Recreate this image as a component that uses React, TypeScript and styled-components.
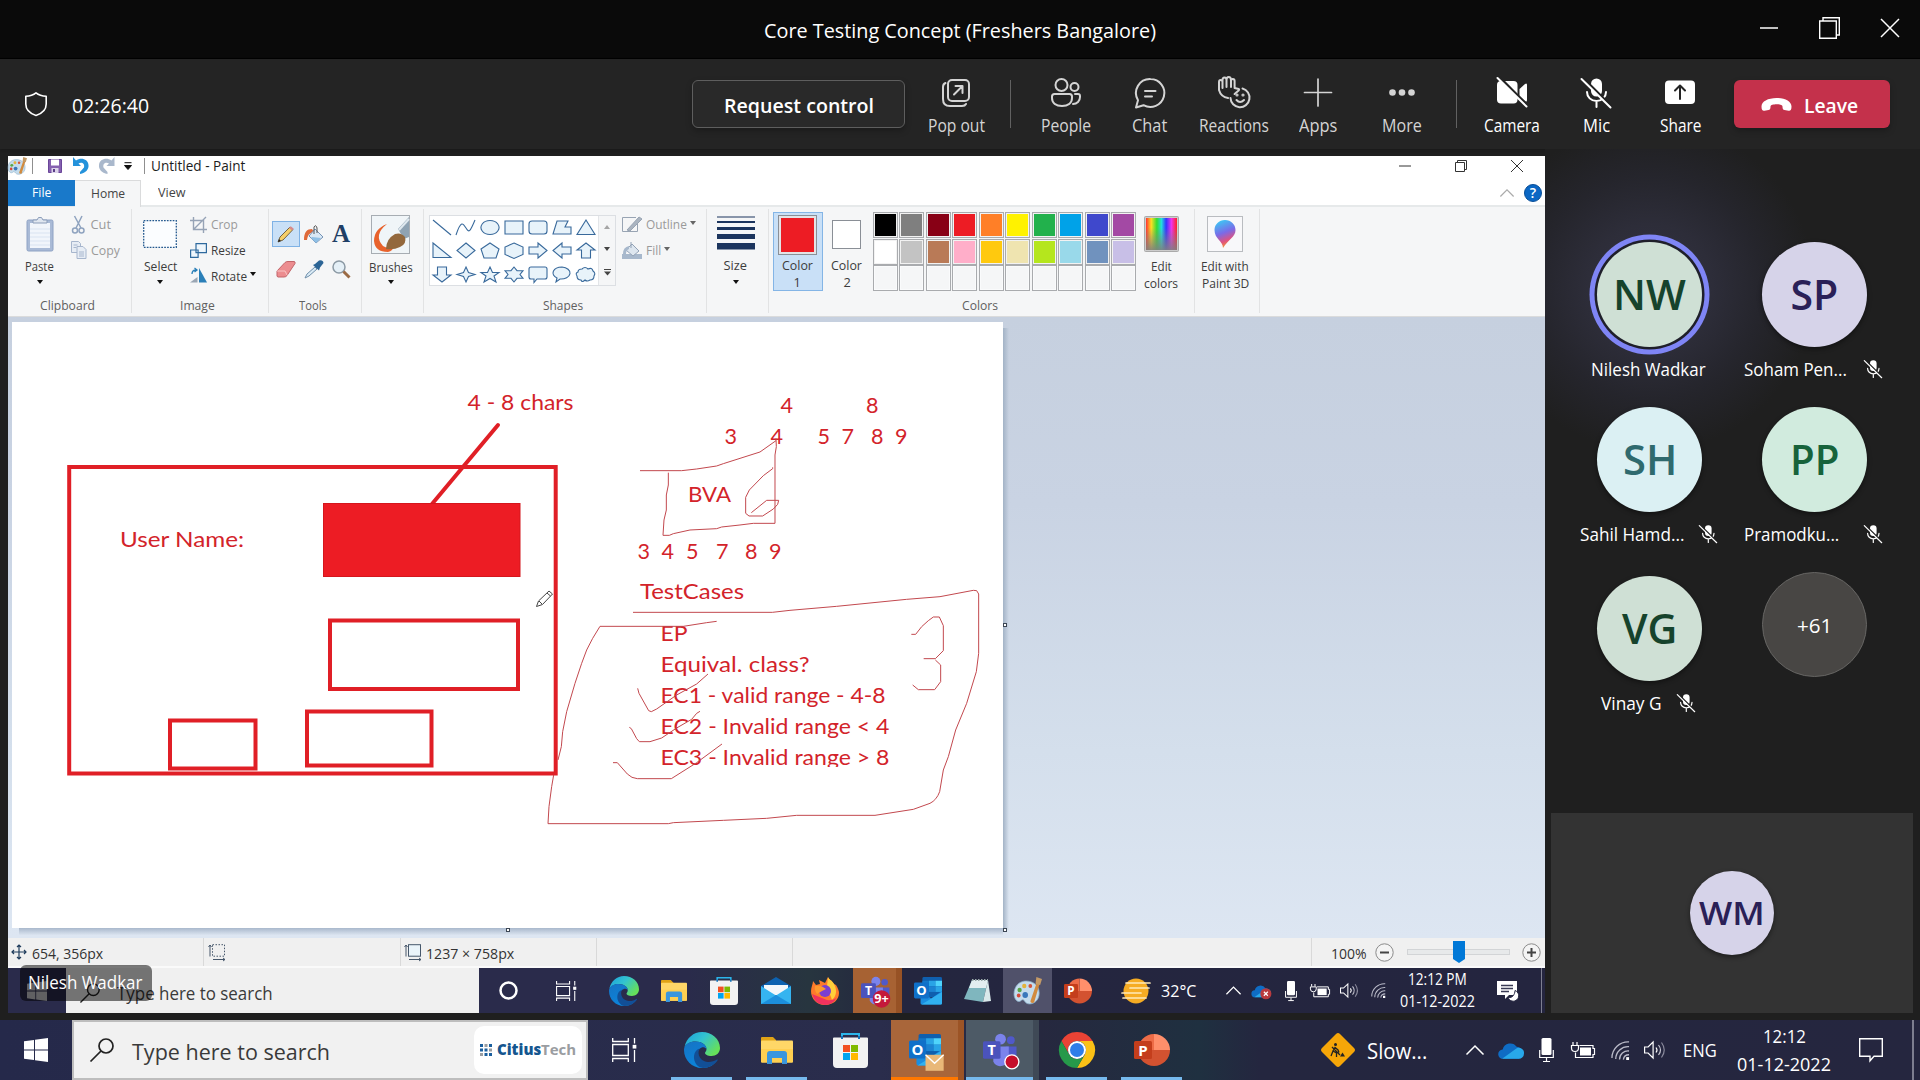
import React, { useLayoutEffect, useRef, useState } from "react";
import styled, { createGlobalStyle, css } from "styled-components";

const ui = '"Open Sans", "Noto Sans", sans-serif';

const GlobalStyle = createGlobalStyle`
  * { box-sizing: border-box; }
  body { margin: 0; background: #1f1f1f; font-family: ${ui}; overflow: hidden; }
  svg { display: block; flex: none; overflow: visible; }
`;

/* ---------- text that keeps a fixed measure ---------- */

const FitBox = styled.span<{ $w: number; $size: number; $color?: string; $weight?: number; $lh?: number }>`
  display: block;
  flex: none;
  width: ${(p) => p.$w}px;
  font-size: ${(p) => p.$size}px;
  line-height: ${(p) => (p.$lh ? `${p.$lh}px` : "1.3")};
  font-weight: ${(p) => p.$weight ?? 400};
  color: ${(p) => p.$color ?? "inherit"};
  white-space: nowrap;
`;
const FitInner = styled.span`
  display: inline-block;
  transform-origin: 0 50%;
`;

type FitProps = { w: number; size: number; color?: string; weight?: number; lh?: number; dx?: number; dy?: number; children: string };

function Fit({ w, size, color, weight, lh, dx = 0, dy = 0, children }: FitProps) {
  const ref = useRef<HTMLSpanElement>(null);
  const [scale, setScale] = useState(1);
  useLayoutEffect(() => {
    if (ref.current && ref.current.offsetWidth) setScale(w / ref.current.offsetWidth);
  }, [w, size, children]);
  return (
    <FitBox $w={w} $size={size} $color={color} $weight={weight} $lh={lh}>
      <FitInner ref={ref} style={{ transform: `translate(${dx}px, ${dy}px) scaleX(${scale})` }}>
        {children}
      </FitInner>
    </FitBox>
  );
}

/* ---------- page shell ---------- */

const Page = styled.div`
  width: 1920px;
  height: 1080px;
  display: flex;
  flex-direction: column;
  background: #1f1f1f;
  overflow: hidden;
`;
const TitleBar = styled.header`
  height: 59px;
  flex: none;
  display: flex;
  align-items: center;
  background: #0a0a0a;
  border-bottom: 1px solid #000;
  color: #fff;
  padding: 3px 21px 0 764px;
`;
const WindowButtons = styled.div`
  display: flex;
  align-items: center;
  gap: 41px;
  margin: -5px 0 0 auto;
`;
const MeetingBar = styled.div`
  height: 90px;
  flex: none;
  display: flex;
  align-items: center;
  background: #242424;
  box-shadow: 0 1px 2px #1a1a1a;
  padding: 0 29px 0 25px;
`;
const RequestButton = styled.button`
  width: 213px;
  height: 48px;
  margin-left: 543px;
  display: flex;
  align-items: center;
  justify-content: center;
  border: 1px solid #5e5e5e;
  border-radius: 6px;
  background: #292929;
  color: #fff;
  font-family: inherit;
  padding: 3px 0 0;
  box-shadow: 0 3px 6px rgba(0, 0, 0, 0.25);
`;
const Tool = styled.div<{ $bright?: boolean; $gap?: number }>`
  width: 84px;
  height: 65px;
  margin-left: ${(p) => p.$gap ?? 0}px;
  display: flex;
  flex-direction: column;
  align-items: center;
  justify-content: space-between;
  padding-top: 3px;
  margin-bottom: -2px;
  color: ${(p) => (p.$bright ? "#fff" : "#d4d4d4")};
  svg { height: 36px; }
`;
const BarDivider = styled.div<{ $ml: number }>`
  width: 1px;
  height: 48px;
  margin-left: ${(p) => p.$ml}px;
  background: #616161;
`;
const LeaveButton = styled.button`
  width: 156px;
  height: 48px;
  margin-left: 12px;
  border: 0;
  border-radius: 6px;
  background: #c4314b;
  color: #fff;
  font-family: inherit;
  display: flex;
  align-items: center;
  gap: 12px;
  padding: 2px 0 0 27px;
  box-shadow: 0 3px 6px rgba(0, 0, 0, 0.25);
`;
const Body = styled.main`
  height: 871px;
  flex: none;
  display: flex;
  padding-left: 8px;
`;

/* ---------- participants ---------- */

const Sidebar = styled.aside`
  width: 375px;
  display: flex;
  flex-direction: column;
  padding: 93px 0 7px 6px;
  background: radial-gradient(circle 165px at 105px 138px, #333342 0%, #2d2d39 38%, #25252c 68%, #1f1f1f 100%);
`;
const People = styled.div`
  display: grid;
  grid-template-columns: 165px 165px;
  grid-auto-rows: 165px;
  padding-left: 16px;
  height: 571px;
`;
const Person = styled.div<{ $mt?: number }>`
  display: flex;
  flex-direction: column;
  align-items: center;
  padding-top: ${(p) => p.$mt ?? 0}px;
`;
const Avatar = styled.div<{ $bg: string; $fg: string; $speaking?: boolean; $small?: boolean; $outline?: boolean }>`
  width: ${(p) => (p.$small ? 84 : 105)}px;
  height: ${(p) => (p.$small ? 84 : 105)}px;
  flex: none;
  border-radius: 50%;
  display: flex;
  align-items: center;
  justify-content: center;
  background: ${(p) => p.$bg};
  color: ${(p) => p.$fg};
  box-shadow: 0 2px 5px rgba(0, 0, 0, 0.45);
  ${(p) => p.$outline && css`border: 1px solid #666563; box-shadow: none;`}
  ${(p) => p.$speaking && css`box-shadow: 0 0 0 2.5px #1f1f2a, 0 0 0 7.5px #7f85f5;`}
`;
const NameRow = styled.div<{ $gap: number }>`
  display: flex;
  align-items: center;
  gap: ${(p) => p.$gap}px;
  margin: 10px 3px 0 0;
  color: #fff;
`;
const SelfTile = styled.div`
  width: 362px;
  height: 200px;
  background: #333;
  display: flex;
  align-items: center;
  justify-content: center;
`;

/* ---------- shared Paint window ---------- */

const Shared = styled.section`
  width: 1537px;
  height: 857px;
  margin-top: 7px;
  flex: none;
  display: flex;
  flex-direction: column;
  position: relative;
  background: #fff;
`;
const PaintTitle = styled.div`
  height: 24px;
  flex: none;
  display: flex;
  align-items: center;
  padding: 0 22px 5px 0;
`;
const ThinRule = styled.i<{ $ml: number }>`
  width: 1px;
  height: 16px;
  background: #8f8f8f;
  margin-left: ${(p) => p.$ml}px;
`;
const Gap = styled.i<{ $w: number }>`
  width: ${(p) => p.$w}px;
  flex: none;
`;
const PaintButtons = styled.div`
  display: flex;
  align-items: center;
  gap: 44px;
  margin-left: auto;
`;
const Tabs = styled.div`
  height: 27px;
  flex: none;
  display: flex;
  align-items: stretch;
  border-bottom: 2px solid #e6e9ea;
`;
const Tab = styled.div<{ $kind: "file" | "active" | "plain"; $w: number }>`
  width: ${(p) => p.$w}px;
  display: flex;
  align-items: center;
  justify-content: center;
  color: #444;
  ${(p) => p.$kind === "file" && css`background: #1979ca; color: #fff; margin-bottom: -1px;`}
  ${(p) =>
    p.$kind === "active" &&
    css`background: #f5f6f7; border: 1px solid #dadbdc; border-bottom: 0; border-left: 0; margin-bottom: -2px;`}
`;
const TabTools = styled.div`
  display: flex;
  align-items: center;
  gap: 10px;
  margin-left: auto;
  padding-right: 3px;
`;
const Help = styled.div`
  width: 18px;
  height: 18px;
  border-radius: 50%;
  background: #0b67c4;
  border: 1px solid #0a4f98;
  color: #fff;
  font-size: 14px;
  line-height: 16px;
  font-weight: 600;
  text-align: center;
`;
const Ribbon = styled.div`
  height: 110px;
  flex: none;
  display: flex;
  background: #f5f6f7;
  border-bottom: 1px solid #dadbdc;
  padding: 2px 0 3px;
`;
const Group = styled.div<{ $w: number }>`
  width: ${(p) => p.$w}px;
  flex: none;
  display: flex;
  flex-direction: column;
  justify-content: space-between;
  border-right: 1px solid #e2e3e4;
`;
const GroupBody = styled.div<{ $pl?: number }>`
  height: 86px;
  display: flex;
  align-items: flex-start;
  padding-left: ${(p) => p.$pl ?? 0}px;
`;
const GroupName = styled.div`
  height: 18px;
  display: flex;
  justify-content: center;
  align-items: center;
  color: #606060;
  padding: 2px 4px 0 0;
`;
const BigButton = styled.div<{ $w: number }>`
  width: ${(p) => p.$w}px;
  display: flex;
  flex-direction: column;
  align-items: center;
  color: #3c3c3c;
`;
const IconArea = styled.div<{ $h?: number }>`
  height: ${(p) => p.$h ?? 50}px;
  display: flex;
  align-items: center;
  justify-content: center;
`;
const Caret = styled.i<{ $mt?: number; $color?: string; $small?: boolean }>`
  width: 0;
  height: 0;
  margin-top: ${(p) => p.$mt ?? 0}px;
  border: ${(p) => (p.$small ? 3 : 3.5)}px solid transparent;
  border-top: 4px solid ${(p) => p.$color ?? "#111"};
  border-bottom: 0;
`;
const SmallRows = styled.div<{ $pl?: number }>`
  display: flex;
  flex-direction: column;
  padding: 3px 0 0 ${(p) => p.$pl ?? 0}px;
`;
const SmallRow = styled.div<{ $icon: number; $off?: boolean }>`
  height: 25.6px;
  display: flex;
  align-items: center;
  gap: 3.5px;
  color: ${(p) => (p.$off ? "#9a9a9a" : "#3c3c3c")};
  svg { width: ${(p) => p.$icon}px; }
`;
const ToolGrid = styled.div`
  display: grid;
  grid-template-columns: 28px 28px 26px;
  grid-template-rows: 26px 26px;
  row-gap: 9px;
  padding: 12px 0 0 3px;
`;
const ToolCell = styled.div<{ $on?: boolean }>`
  display: flex;
  align-items: center;
  justify-content: center;
  ${(p) => p.$on && css`background: #c9e0f7; border: 1px solid #7fb2e5;`}
`;
const LetterA = styled.span`
  font: bold 25px/24px "Liberation Serif", serif;
  color: #1f3f66;
`;
const Gallery = styled.div`
  width: 187px;
  height: 71px;
  margin: 6px 0 0 5px;
  display: flex;
  border: 1px solid #dcdfe3;
  background: #fff;
`;
const ShapeGrid = styled.div`
  display: grid;
  grid-template-columns: repeat(7, 24px);
  grid-template-rows: repeat(3, 23.3px);
  place-items: center;
`;
const GalleryScroll = styled.div`
  flex: 1;
  display: flex;
  flex-direction: column;
  align-items: center;
  justify-content: space-around;
  background: #f5f6f7;
  border-left: 1px solid #e3e5e8;
`;
const ColorSlot = styled.div<{ $w: number; $on?: boolean; $ml: number }>`
  width: ${(p) => p.$w}px;
  height: 79px;
  margin: 3px 0 0 ${(p) => p.$ml}px;
  display: flex;
  flex-direction: column;
  align-items: center;
  color: #3c3c3c;
  ${(p) => p.$on && css`background: #c9e0f7; box-shadow: inset 0 0 0 1px #84b5e6;`}
`;
const BigSwatch = styled.div<{ $w: number; $h: number; $c: string; $pad: number }>`
  width: ${(p) => p.$w}px;
  height: ${(p) => p.$h}px;
  margin-right: 1px;
  border: 1px solid #8a8f96;
  background: ${(p) => p.$c};
  box-shadow: inset 0 0 0 ${(p) => p.$pad}px #e3e3e6;
`;
const PaletteGrid = styled.div`
  display: grid;
  grid-template-columns: repeat(10, 25px);
  grid-template-rows: repeat(3, 26px);
  column-gap: 1.45px;
  row-gap: 0.5px;
  margin: 3px 0 0 5px;
`;
const PaletteCell = styled.i<{ $c?: string }>`
  border: 1px solid #a9abae;
  background: ${(p) => p.$c ?? "#f5f6f7"};
  box-shadow: inset 0 0 0 1px ${(p) => (p.$c ? "#f2f2f2" : "#fafbfc")};
`;
const Workspace = styled.div`
  height: 621px;
  flex: none;
  padding: 5px 0 0 4px;
  background: linear-gradient(#c6d0df 0, #c9d3e3 30%, #d4dfec 70%, #dde6f2 100%);
`;
const StatusBar = styled.div`
  height: 30px;
  flex: none;
  display: flex;
  align-items: stretch;
  background: #f0f0f0;
  border-bottom: 2px solid #fafafa;
  color: #333;
`;
const StatusCell = styled.div<{ $w: number; $pl: number }>`
  width: ${(p) => p.$w}px;
  display: flex;
  align-items: center;
  gap: 5px;
  padding-left: ${(p) => p.$pl}px;
  border-right: 1px solid #d9d9d9;
`;
const Zoomer = styled.div`
  flex: 1;
  display: flex;
  align-items: center;
  padding-left: 20px;
`;

/* ---------- taskbars ---------- */

const InnerBar = styled.div`
  height: 45px;
  flex: none;
  display: flex;
  align-items: center;
  background: linear-gradient(90deg, #2a2b4b 0, #2a2b4b 680px, #27353f 800px, #24263f 880px, #24253f 100%);
  color: #fff;
`;
const Slot = styled.div<{ $w: number; $bg?: string; $under?: string; $edge?: string; $ml?: number }>`
  width: ${(p) => p.$w}px;
  height: 100%;
  flex: none;
  margin-left: ${(p) => p.$ml ?? 0}px;
  display: flex;
  align-items: center;
  justify-content: center;
  background: ${(p) => p.$bg ?? "transparent"};
  ${(p) => p.$edge && css`border-right: 6px solid ${p.$edge};`}
  ${(p) => p.$under && css`box-shadow: inset 0 -3px 0 ${p.$under};`}
`;
const InnerSearch = styled.div`
  width: 413px;
  height: 100%;
  display: flex;
  align-items: center;
  gap: 18px;
  padding: 4px 0 0 14px;
  background: #f0f0f0;
  color: #3a3a3a;
`;
const Clock = styled.div<{ $w: number; $gap: number; $ml: number }>`
  width: ${(p) => p.$w}px;
  margin-left: ${(p) => p.$ml}px;
  display: flex;
  flex-direction: column;
  align-items: center;
  gap: ${(p) => p.$gap}px;
`;
const EndLine = styled.i<{ $ml: number; $w: number }>`
  width: ${(p) => p.$w}px;
  height: 100%;
  margin-left: ${(p) => p.$ml}px;
  background: #7d7e90;
`;
const SpeakerTag = styled.div`
  position: absolute;
  left: 12px;
  top: 809px;
  width: 132px;
  height: 36px;
  border-radius: 6px;
  background: rgba(0, 0, 0, 0.52);
  color: #fff;
  display: flex;
  align-items: center;
  justify-content: center;
  padding: 0 2px 1px 0;
`;
const OuterBar = styled.footer`
  height: 60px;
  flex: none;
  display: flex;
  align-items: center;
  background: linear-gradient(90deg, #25294a 0, #2a2d4c 880px, #26283f 1040px, #1f3040 1200px, #24263f 1260px, #25263f 100%);
  color: #fff;
`;
const OuterSearch = styled.div`
  width: 516px;
  height: 60px;
  display: flex;
  align-items: center;
  border: 2px solid #bdbdbd;
  background: #f1f1f1;
  color: #3a3a3a;
  padding-left: 16px;
`;
const Pill = styled.div`
  width: 108px;
  height: 48px;
  margin-left: auto;
  margin-right: 4px;
  border-radius: 10px;
  background: #fff;
  display: flex;
  align-items: center;
  justify-content: center;
  gap: 5px;
`;
const Brand = styled.div`
  display: flex;
`;

/* ---------- icons ---------- */

const line = { fill: "none", stroke: "currentColor", strokeWidth: 2, strokeLinecap: "round", strokeLinejoin: "round" } as const;

const MicOff = ({ s }: { s: number }) => (
  <svg width={s} height={s} viewBox="0 0 30 30" fill="none">
    <rect x="10" y="0.5" width="11" height="18" rx="5.5" fill="currentColor" />
    <path d="M6 14c0 5 4 9 9.500 9s9.500-4 9.500-9M15.500 23v6" stroke="currentColor" strokeWidth="2" strokeLinecap="round" />
    <path d="M2 0l29 29" stroke="#222" strokeWidth="2.500" />
    <path d="M0.500 1l29 28.500" stroke="currentColor" strokeWidth="2" strokeLinecap="round" />
  </svg>
);

const Explorer = ({ w, h }: { w: number; h: number }) => (
  <svg width={w} height={h} viewBox="0 0 32 27" preserveAspectRatio="none">
    <path d="M0 1a1 1 0 0 1 1-1h11l3 3v6H0z" fill="#e0a316" />
    <rect y="3.500" width="32" height="22" rx="1" fill="#ffd767" />
    <path d="M0 12h32v12.500a1 1 0 0 1-1 1H1a1 1 0 0 1-1-1z" fill="#ffcf50" />
    <path d="M6 27V17a3 3 0 0 1 3-3h14a3 3 0 0 1 3 3v10h-5v-6H11v6z" fill="#3a96dd" />
  </svg>
);

const Store = ({ w, h }: { w: number; h: number }) => (
  <svg width={w} height={h} viewBox="0 0 35 35" preserveAspectRatio="none">
    <path d="M9 7V1h17v6" fill="none" stroke="#2cb5ea" strokeWidth="2" />
    <path d="M0 5.500a1 1 0 0 1 1-1h33a1 1 0 0 1 1 1V31a4 4 0 0 1-4 4H4a4 4 0 0 1-4-4z" fill="#f2f2f2" />
    <path d="M9 6V3M26 6V3" stroke="#1573b8" strokeWidth="2" />
    <rect x="10" y="12" width="7" height="7" fill="#f25022" />
    <rect x="18" y="12" width="7" height="7" fill="#7fba00" />
    <rect x="10" y="20" width="7" height="7" fill="#00a4ef" />
    <rect x="18" y="20" width="7" height="7" fill="#ffb900" />
  </svg>
);

const Edge = ({ s, id }: { s: number; id: string }) => (
  <svg width={s} height={s} viewBox="0 0 36 36">
    <defs>
      <linearGradient id={`${id}a`} x1="0" y1="0" x2="1" y2="0.600">
        <stop offset="0" stopColor="#1a9fdc" />
        <stop offset="0.500" stopColor="#33c3d0" />
        <stop offset="1" stopColor="#66e05a" />
      </linearGradient>
      <linearGradient id={`${id}b`} x1="0" y1="0" x2="0.600" y2="1">
        <stop offset="0" stopColor="#1673c4" />
        <stop offset="1" stopColor="#0a86dd" />
      </linearGradient>
    </defs>
    <path d="M0.500 15C2.500 6 9.500 0 18 0c10 0 18 7 18 16 0 5-4 8-8.500 8-4 0-6.500-1.500-6.500-3 0-1 1.500-1.500 1.500-4 0-4-5-7.500-11-7.500-4.500 0-9 2-11 5.500z" fill={`url(#${id}a)`} />
    <path d="M0 18c0-5.500 5-8.500 11.500-8.500 6 0 11 3.500 11 7.500-2-2.500-5-2-7 0-4 3-3 11 3 14 5 2.500 11 1.500 14.500-3C30 33 25 36 18 36 8 36 0 28 0 18z" fill={`url(#${id}b)`} />
    <path d="M15.500 16.500c-3 6.500 1.500 13 8 13.500 3.500.300 7-1 9.500-2.500.600-.300 1 .200.600.800C30.500 33 25 36 19 36c-6-.500-9.500-6.500-9-12 .300-3.500 2.500-6.500 5.500-7.500z" fill="#124f97" />
  </svg>
);

const Outlook = ({ s, mail }: { s: number; mail?: boolean }) => (
  <svg width={s} height={s} viewBox="0 0 30 30">
    <rect x="9" y="0" width="21" height="22" rx="1.500" fill="#0f5fae" />
    <rect x="9" y="4" width="7" height="6" fill="#1276c8" />
    <rect x="16" y="4" width="7" height="6" fill="#29a4e6" />
    <rect x="23" y="4" width="7" height="6" fill="#4fd4fb" />
    <rect x="16" y="10" width="7" height="6" fill="#1c83d2" />
    <rect x="23" y="10" width="7" height="6" fill="#29a4e6" />
    <path d="M7 15l11.500 8L30 15v13a1.500 1.500 0 0 1-1.500 1.500h-20A1.500 1.500 0 0 1 7 28z" fill="#1a8ee0" />
    <path d="M30 16v12a1.500 1.500 0 0 1-1.500 1.500H8z" fill="#30b1f0" />
    <rect x="0" y="6" width="16" height="17" rx="1.500" fill="#0f70c9" />
    <text x="8" y="19.500" fontSize="14" fontWeight="700" fill="#fff" textAnchor="middle" fontFamily="Open Sans, sans-serif">O</text>
    {mail && (
      <g>
        <rect x="15.500" y="19.500" width="17" height="15" fill="#e9b878" />
        <path d="M15.500 19.500l8.500 8 8.500-8" fill="none" stroke="#fff" strokeWidth="1.300" />
      </g>
    )}
  </svg>
);

const TeamsIcon = ({ s, badge }: { s: number; badge: "count" | "live" }) => (
  <svg width={s} height={s} viewBox="0 0 32 32">
    <circle cx="27" cy="6" r="3.800" fill="#5059c9" />
    <circle cx="17" cy="5" r="5.200" fill="#7b83eb" />
    <path d="M22 12h10.500v10a6 6 0 0 1-10 4z" fill="#5059c9" />
    <path d="M10 12h15v11a8 8 0 0 1-15 4z" fill="#7b83eb" />
    <rect x="0" y="7" width="17" height="17" rx="1.500" fill="#4b53bc" />
    <text x="8.500" y="20.500" fontSize="14" fontWeight="700" fill="#fff" textAnchor="middle" fontFamily="Open Sans, sans-serif">T</text>
    {badge === "live" ? (
      <circle cx="28" cy="27" r="6.800" fill="#c50f2b" stroke="#fff" strokeWidth="1.300" />
    ) : (
      <g>
        <circle cx="23.500" cy="25" r="10" fill="#c4183a" />
        <text x="23.500" y="30" fontSize="14.500" fontWeight="700" fill="#fff" textAnchor="middle" fontFamily="Open Sans, sans-serif">9+</text>
      </g>
    )}
  </svg>
);

const Ppt = ({ s }: { s: number }) => (
  <svg width={s} height={s} viewBox="0 0 36 36">
    <path d="M20 2a16 16 0 0 1 16 16H20z" fill="#ff8f6b" />
    <path d="M20 2a16 16 0 0 0-16 16h16z" fill="#ed6c47" />
    <path d="M4 18h32a16 16 0 0 1-32 0z" fill="#d35230" />
    <rect x="0" y="9" width="18" height="18" rx="1.500" fill="#c43e1c" />
    <text x="9" y="23.500" fontSize="15" fontWeight="700" fill="#fff" textAnchor="middle" fontFamily="Open Sans, sans-serif">P</text>
  </svg>
);

const Chrome = () => (
  <svg width="36" height="36" viewBox="0 0 36 36">
    <path d="M18 9h15.600A18 18 0 0 0 2.400 9l7.800 13.500A9 9 0 0 1 18 9z" fill="#ea4335" />
    <path d="M33.600 9H18a9 9 0 0 1 7.800 13.500L18 36A18 18 0 0 0 33.600 9z" fill="#fbc116" />
    <path d="M2.400 9A18 18 0 0 0 18 36l7.800-13.500a9 9 0 0 1-15.600 0z" fill="#26994a" />
    <circle cx="18" cy="18" r="9" fill="#fff" />
    <circle cx="18" cy="18" r="7" fill="#2f7de9" />
  </svg>
);

const PaletteIcon = ({ w, h }: { w: number; h: number }) => (
  <svg width={w} height={h} viewBox="0 0 30 28" preserveAspectRatio="none">
    <path d="M13 4C5 4 0 10 0 17c0 5 4 9 7 7 2-1.500 3-2 5 1 3 4 15 2 15-9C27 8 20 4 13 4z" fill="#c5dcec" stroke="#86aac6" strokeWidth="0.800" />
    <circle cx="6" cy="13" r="2.300" fill="#5aa646" />
    <circle cx="11" cy="9" r="2.300" fill="#e4b33b" />
    <circle cx="5" cy="18.500" r="2" fill="#d54a3a" />
    <circle cx="17.500" cy="9" r="2" fill="#d2553c" />
    <circle cx="12" cy="18" r="3" fill="#3a78bb" />
    <path d="M20 26c-2 0-3-1-2-3l7-19 3 1-6 19c0 1-1 2-2 2z" fill="#d18b3f" />
    <path d="M24 0l6 2-2 6-5-1z" fill="#c49a66" />
  </svg>
);

const WinLogo = ({ s, fill }: { s: number; fill: string }) => (
  <svg width={s} height={s} viewBox="0 0 24 24">
    <path d="M0 3.300l10-1.400v9.600H0zM11 1.700L24 0v11.500H11zM0 12.500h10v9.600L0 20.700zM11 12.500h13V24l-13-1.700z" fill={fill} />
  </svg>
);

const TaskView = ({ s }: { s: number }) => (
  <svg width={s} height={s} viewBox="0 0 24 24" fill="none" stroke="#fff" strokeWidth="1.300">
    <path d="M0.700 6.500h15.600v11H0.700zM0.700 0v3.500h15.600V0M0.700 24v-3.500h15.600V24M22.500 0v5.500M22.500 12v12" />
    <rect x="21.300" y="7.500" width="2.400" height="2.400" fill="#fff" />
  </svg>
);

const SearchIcon = ({ s }: { s: number }) => (
  <svg width={s} height={s} viewBox="0 0 24 24" fill="none" stroke="#222" strokeWidth="1.700">
    <circle cx="16" cy="8" r="7" />
    <path d="M11 13L0.500 23.500" />
  </svg>
);

const TrayMic = ({ w, h }: { w: number; h: number }) => (
  <svg width={w} height={h} viewBox="0 0 15 24" preserveAspectRatio="none">
    <rect x="2.500" y="0" width="10" height="17" rx="1.500" fill="#fff" />
    <path d="M0.700 12v7.500h13.600V12M7.500 20v3.500M4 23.500h7" fill="none" stroke="#fff" strokeWidth="1.200" />
  </svg>
);
const Battery = ({ w, h }: { w: number; h: number }) => (
  <svg width={w} height={h} viewBox="0 0 24 17" preserveAspectRatio="none" fill="none" stroke="#fff" strokeWidth="1.200">
    <path d="M8.500 3.500H22v3h1.500v6H22v3H4.500v-5M2 0v3M6 0v3M0.500 3.500h7V6a3.500 3.500 0 0 1-7 0z" />
    <rect x="9" y="5.500" width="11" height="8" fill="#fff" stroke="none" />
  </svg>
);
const Wifi = ({ s }: { s: number }) => (
  <svg width={s} height={s} viewBox="0 0 20 20" fill="none" stroke="#b9bac8" strokeWidth="1.400">
    <path d="M1 18A17 17 0 0 1 19 1M5 19A13 13 0 0 1 19 6M9 19.500A9 9 0 0 1 19 10.500M13 19.500A6 6 0 0 1 19 14.500" />
    <rect x="16" y="17" width="3" height="3" fill="#fff" stroke="none" />
  </svg>
);
const Speaker = ({ w, h }: { w: number; h: number }) => (
  <svg width={w} height={h} viewBox="0 0 22 18" preserveAspectRatio="none" fill="none" stroke="#fff" strokeWidth="1.200">
    <path d="M0.600 6v6h3.500l5 5V1l-5 5zM12 6.500q2 2.500 0 5" />
    <path d="M14.500 4q4 5 0 10" stroke="#c5c5d0" />
    <path d="M17.500 1.500q5.500 7.500 0 15" stroke="#8a8a9c" />
  </svg>
);
const ChevronUp = ({ w, h, c }: { w: number; h: number; c: string }) => (
  <svg width={w} height={h} viewBox="0 0 18 10" fill="none" stroke={c} strokeWidth="1.500">
    <path d="M0.500 9.500L9 1l8.500 8.500" />
  </svg>
);
const Cloud = ({ w, h, bad }: { w: number; h: number; bad?: boolean }) => (
  <svg width={w} height={h} viewBox="0 0 24 16">
    <path d="M4 16a4.500 4.500 0 0 1-.500-9A7.500 7.500 0 0 1 17 4.500 6 6 0 0 1 19 16z" fill="#0f6cc4" />
    <path d="M3 16l13-9.500A5 5 0 0 1 24 11a5 5 0 0 1-5 5z" fill="#28a8ea" />
    {bad && (
      <g>
        <circle cx="17.500" cy="11.500" r="7" fill="#b93a3e" />
        <path d="M15 9l5 5m0-5l-5 5" stroke="#fff" strokeWidth="1.500" />
      </g>
    )}
  </svg>
);

const DimIcon = ({ dashed }: { dashed?: boolean }) => (
  <svg width="18" height="17" viewBox="0 0 18 17" fill="none" stroke="#46576b" strokeWidth="1">
    <rect x="4.500" y="0.700" width="12" height="11.500" fill={dashed ? "none" : "#eaf4fa"} strokeDasharray={dashed ? "1.500 1.500" : undefined} />
    <path d="M2 1v11.500M0.500 3L2 1l1.500 2M5 15.500h12M15 14l2 1.500-2 1.500" />
  </svg>
);

/* ---------- shape gallery ---------- */

const shapePaths = [
  "M1 0L19 15",
  "M0 15C5 0 7 3 10 8S14 12 19 0",
  "M10 .5a9 7 0 1 0 .01 0z",
  "M1 1h18v13H1z",
  "M4 1h12q3 0 3 3v7q0 3-3 3H4q-3 0-3-3V4q0-3 3-3z",
  "M5 1h11l-3 6h6v7H1z",
  "M10 0l9 14.500H1z",
  "M1 0v14.500h18z",
  "M10 0l9 7.500-9 7.500-9-7.500z",
  "M10 0l9 6-3 9H4L1 6z",
  "M10 0l9 4v7.500l-9 4-9-4V4z",
  "M1 4h9V0l9 7.500L10 15v-4H1z",
  "M19 4h-9V0L1 7.500 10 15v-4h9z",
  "M10 0l9 7h-4.500v8h-9V7H1z",
  "M10 15l9-7h-4.500V0h-9v8H1z",
  "M10 0l2.500 5.500L19 7.500l-6.500 2L10 15 7.500 9.500 1 7.500l6.500-2z",
  "M10 0l2.500 5.500H19L14 9l2 6-6-3.500L4 15l2-6-5-3.500h6.500z",
  "M10 0l3 3.700h6L16 7.500l3 3.800h-6L10 15l-3-3.700H1L4 7.500 1 3.700h6z",
  "M3 0h14q2 0 2 2v8q0 2-2 2H9l-3 3.500V12H3q-2 0-2-2V2q0-2 2-2z",
  "M10 0a9 6 0 1 1-2 12l-4 3 1-4A9 6 0 0 1 10 0z",
  "M6 2q3-3 6 0 4-2 5 2 3 2 1 5 0 4-4 4-3 2-5 0-3 3-4 0-4 0-4-4-2-3 1-4 0-3 4-3z",
];

const paletteColors: (string | undefined)[] = [
  "#000000", "#7f7f7f", "#880015", "#ed1c24", "#ff7f27", "#fff200", "#22b14c", "#00a2e8", "#3f48cc", "#a349a4",
  "#ffffff", "#c3c3c3", "#b97a57", "#ffaec9", "#ffc90e", "#efe4b0", "#b5e61d", "#99d9ea", "#7092be", "#c8bfe7",
  ...Array(10).fill(undefined),
];

/* ---------- the drawing ---------- */

const notes: [number, number, number, string][] = [
  [467.5, 410, 106, "4 - 8 chars"],
  [120, 547.3, 124, "User Name:"],
  [780.5, 412.7, 12.5, "4"], [866, 412.7, 12.5, "8"],
  [724.5, 444.3, 12.5, "3"], [770.5, 444.3, 12.5, "4"], [817.5, 444.3, 12.5, "5"], [841.5, 444.3, 12.5, "7"], [871, 444.3, 12.5, "8"], [895, 444.3, 12.5, "9"],
  [688, 502.3, 43, "BVA"],
  [637.5, 559, 12.5, "3"], [661.5, 559, 12.5, "4"], [686, 559, 12.5, "5"], [716, 559, 12.5, "7"], [745, 559, 12.5, "8"], [769, 559, 12.5, "9"],
  [640, 599, 104, "TestCases"],
  [660.5, 640.6, 27, "EP"],
  [660.5, 671.8, 149, "Equival. class?"],
  [660.5, 703, 225, "EC1 - valid range - 4-8"],
  [660.5, 734, 229, "EC2 - Invalid range < 4"],
];

const Drawing = () => (
  <svg width="1000" height="616" viewBox="12 322 1000 616" fontFamily="Lato, Carlito, sans-serif" fontSize="22" fill="#d3232a">
    <defs>
      <linearGradient id="shB" x1="0" y1="0" x2="0" y2="1"><stop offset="0" stopColor="#a9b8cc" /><stop offset="1" stopColor="#dbe4f0" /></linearGradient>
      <linearGradient id="shR" x1="0" y1="0" x2="1" y2="0"><stop offset="0" stopColor="#a3b3c6" /><stop offset="1" stopColor="#a3b3c6" stopOpacity="0" /></linearGradient>
      <clipPath id="lastLine"><rect x="650" y="740" width="260" height="27" /></clipPath>
    </defs>
    <rect x="19" y="928" width="984" height="7" fill="url(#shB)" />
    <rect x="1003" y="328" width="6" height="602" fill="url(#shR)" />
    <rect x="12" y="322" width="991" height="606" fill="#fff" />
    <g fill="none" stroke="#e01f26" strokeWidth="4">
      <rect x="69.200" y="467" width="486.500" height="306.500" />
      <rect x="330" y="620.500" width="188" height="68.500" />
      <rect x="170" y="720.500" width="85.500" height="48" />
      <rect x="307" y="711.500" width="124.500" height="54" />
      <path d="M498 425L432 504" strokeLinecap="round" />
    </g>
    <rect x="323.500" y="503.500" width="196.500" height="73" fill="#ed1c24" stroke="#d4161d" />
    {notes.map(([x, y, w, t], i) => (
      <text key={i} x={x} y={y} textLength={w} lengthAdjust="spacingAndGlyphs">{t}</text>
    ))}
    <g clipPath="url(#lastLine)">
      <text x="660.500" y="765.200" textLength="229" lengthAdjust="spacingAndGlyphs">EC3 - Invalid range &gt; 8</text>
    </g>
    <g transform="translate(540 370) scale(.33333)" fill="none" stroke="#c2474d" strokeWidth="3" strokeLinejoin="round">
      <path d="M300 302H425L470 297 530 288 550 281 660 246 708 212M708 205L709 230 705 255V460H640L600 465 545 471 530 476 450 480 400 491 388 496H369L372 450 379 420V375L385 345V308" />
      <path d="M698 292V296L670 317 628 360 617 382V430L627 438H668L700 417 713 403 716 391H680L634 428" />
      <path d="M279 727H697L750 721 890 709 1100 688 1200 680 1300 661 1310 662 1316 672V850L1309 905 1280 1000 1247 1080 1225 1160 1210 1200 1199 1265Q1190 1290 1170 1300L1120 1318 1005 1336H770L680 1345 550 1351 400 1358 385 1361H24L27 1310 35 1250 41 1215M54 1170L64 1130 68 1085 80 1025 105 940 125 880 140 840 158 805 180 769H430L500 758 530 754" />
      <path d="M1114 793H1127L1145 770 1165 752 1180 741H1198L1210 767V842L1186 866H1151M1186 870L1202 885V935L1184 959H1135L1118 945" />
      <path d="M293 955L297 970 326 1022 334 1025 350 1017 410 975 470 942 504 912" />
      <path d="M268 1072L274 1076 290 1106 298 1115H330L365 1104 410 1074 455 1048 470 1030 480 1024" />
      <path d="M219 1178H232L262 1212Q275 1225 292 1226H394L470 1178 546 1122" />
    </g>
    <g fill="#fff" stroke="#3c4654" strokeWidth="1">
      <rect x="1003.500" y="623.500" width="3" height="3" />
      <rect x="506.500" y="928.500" width="3" height="3" />
      <rect x="1003.500" y="928.500" width="3" height="3" />
    </g>
    <path d="M536.500 606.500l2-5.500 10.500-10 3.500 3-10 10.500zM547 593l3.500 3M539 601l3 3" fill="#fff" stroke="#444" strokeWidth="1" />
  </svg>
);

const L = 12.8;

function PaintWindow() {
  return (
    <Shared>
      <PaintTitle>
        <PaletteIcon w={19} h={18} />
        <ThinRule $ml={5} />
        <Gap $w={15} />
        <svg width="14" height="14" viewBox="0 0 14 14"><path d="M0.500 0.500h13v13h-13z" fill="#8560b0" stroke="#6a4699" /><rect x="3" y="0.500" width="8" height="6" fill="#fff" /><rect x="3.500" y="9" width="7" height="5" fill="#dcd3ea" /><rect x="5" y="10" width="2" height="3" fill="#5a3d86" /></svg>
        <Gap $w={11} />
        <svg width="16" height="17" viewBox="0 0 16 17"><path d="M0 0v9h8L5.500 6.500C9 4.500 12 7 11 10.500L7 15v2c6-1 9-5 8.500-9C15 2 8 0 3 3.500z" fill="#2492db" /></svg>
        <Gap $w={9} />
        <svg width="17" height="17" viewBox="0 0 16 17"><path d="M16 0v9H8l2.500-2.500C7 4.500 4 7 5 10.500L9 15v2C3 16 0 12 .5 8 1 2 8 0 13 3.500z" fill="#a9b8cc" /></svg>
        <Gap $w={9} />
        <svg width="8" height="8" viewBox="0 0 8 8"><path d="M0.500 0.700h7M0.500 3.500h7L4 7.500z" fill="#111" stroke="#111" /></svg>
        <ThinRule $ml={12} />
        <Gap $w={6} />
        <Fit w={94} size={15} color="#1c1c1c">Untitled - Paint</Fit>
        <PaintButtons>
          <svg width="12" height="12" viewBox="0 0 12 12"><path d="M0 6h12" stroke="#333" /></svg>
          <svg width="12" height="12" viewBox="0 0 12 12" fill="none" stroke="#333"><path d="M0.500 2.500h9v9h-9zM2.500 2.500v-2h9v9h-2" /></svg>
          <svg width="12" height="12" viewBox="0 0 12 12"><path d="M0 0l12 12M12 0L0 12" stroke="#333" /></svg>
        </PaintButtons>
      </PaintTitle>
      <Tabs>
        <Tab $kind="file" $w={67}><Fit w={19} size={13.5}>File</Fit></Tab>
        <Tab $kind="active" $w={66}><Fit w={34} size={13.5}>Home</Fit></Tab>
        <Tab $kind="plain" $w={61}><Fit w={28} size={13.5}>View</Fit></Tab>
        <TabTools><ChevronUp w={14} h={8} c="#aaa" /><Help>?</Help></TabTools>
      </Tabs>
      <Ribbon>
        <Group $w={124}>
          <GroupBody $pl={1}>
            <BigButton $w={62}>
              <IconArea>
                <svg width="28" height="35" viewBox="0 0 28 35"><rect x="1" y="3" width="26" height="31" rx="1.500" fill="#a9bad6" stroke="#8ea2c4" /><rect x="4" y="6" width="20" height="25" fill="#f1f5fb" /><path d="M4 12h20M4 16h20M4 20h20M4 24h20M4 28h20" stroke="#d9e3f1" /><path d="M7 6V3h4l1.500-2.500h3L17 3h4v3z" fill="#dfe6f0" stroke="#8b9db9" /></svg>
              </IconArea>
              <Fit w={29} size={L} lh={17} dx={-1} dy={-1}>Paste</Fit>
              <Caret $mt={4} />
            </BigButton>
            <SmallRows>
              <SmallRow $icon={16} $off>
                <svg height="18" viewBox="0 0 16 18" fill="none" stroke="#8fa3bf" strokeWidth="1.500"><path d="M3.500 0L10 12M11 0L5 12" /><circle cx="4" cy="14.500" r="2.500" /><circle cx="10.500" cy="14.500" r="2.500" /></svg>
                <Fit w={20} size={L}>Cut</Fit>
              </SmallRow>
              <SmallRow $icon={16} $off>
                <svg height="18" viewBox="0 0 16 18" fill="#e7edf5" stroke="#a7b6cd"><path d="M0.500 0.500h7l2 2v9h-9zM2.500 4h4M2.500 6.500h3" /><path d="M6 5.500h6l3 3v9H6zM8 11h5M8 13h5M8 15h5" /></svg>
                <Fit w={29} size={L}>Copy</Fit>
              </SmallRow>
            </SmallRows>
          </GroupBody>
          <GroupName><Fit w={55} size={L}>Clipboard</Fit></GroupName>
        </Group>
        <Group $w={137}>
          <GroupBody>
            <BigButton $w={56}>
              <IconArea>
                <svg width="34" height="28"><rect x="0.700" y="0.700" width="32.600" height="26.600" fill="#fbfdff" stroke="#23588f" strokeWidth="1.300" strokeDasharray="1.700 1.200" /></svg>
              </IconArea>
              <Fit w={33} size={L} lh={17} dy={-1}>Select</Fit>
              <Caret $mt={4} />
            </BigButton>
            <SmallRows $pl={2}>
              <SmallRow $icon={17} $off>
                <svg height="16" viewBox="0 0 17 16" fill="none" stroke="#96a3b6" strokeWidth="1.400"><path d="M3.500 0v12.500H17M0 3.500h13.500V16M4 12L16 0" /></svg>
                <Fit w={27} size={L}>Crop</Fit>
              </SmallRow>
              <SmallRow $icon={17}>
                <svg height="15" viewBox="0 0 17 15" fill="#eef6fc" stroke="#2f6a9e" strokeWidth="1.200"><path d="M6 0.600h10.400v9H6zM0.600 7h7.500v7.400H0.600z" /></svg>
                <Fit w={35} size={L}>Resize</Fit>
              </SmallRow>
              <SmallRow $icon={17}>
                <svg height="15" viewBox="0 0 17 15"><path d="M0 14.500L7.500 9v5.500z" fill="#9aa6b4" /><path d="M9 0v14.500h8z" fill="#2a7fb8" /><path d="M2 6q0-4 4-4M4.500 0L7 2 4.500 4" fill="none" stroke="#2a7fb8" strokeWidth="1.300" /></svg>
                <Fit w={36} size={L}>Rotate</Fit>
                <Caret $small $mt={-3} />
              </SmallRow>
            </SmallRows>
          </GroupBody>
          <GroupName><Fit w={35} size={L} dx={-1}>Image</Fit></GroupName>
        </Group>
        <Group $w={93}>
          <GroupBody>
            <ToolGrid>
              <ToolCell $on>
                <svg width="18" height="18" viewBox="0 0 18 18"><path d="M1 17l2-5L13 2l3 2.500L6 15z" fill="#f5cf6a" stroke="#66563a" strokeWidth="0.900" /><path d="M12 3l1.800-1.800 3 2.500L15 5.500z" fill="#d98b8b" /><path d="M1 17l1-3 2 2z" fill="#222" /></svg>
              </ToolCell>
              <ToolCell>
                <svg width="20" height="19" viewBox="0 0 20 19"><path d="M0 15C0 7 3 4 8 4l2 3C5 8 4 10 3 15z" fill="#df6a3a" /><path d="M11 4l8 8-7 6-7-7z" fill="#d9e8f5" stroke="#7492b5" /><path d="M8 12l9 1-5 5-5-5z" fill="#8fc0e6" /><path d="M10 9V2q2-3 3 1v5" fill="none" stroke="#555" /></svg>
              </ToolCell>
              <ToolCell><LetterA>A</LetterA></ToolCell>
              <ToolCell>
                <svg width="20" height="17" viewBox="0 0 20 17"><path d="M1 10L9 1.500Q10 .5 12 .5h6q1.500 0 1 2l-8 12q-1 1.500-3 1.500H2q-1.500-.5-1-2z" fill="#ec8d90" stroke="#c2656a" /><path d="M1 10h8l2 4" fill="none" stroke="#f8c5c5" /></svg>
              </ToolCell>
              <ToolCell>
                <svg width="20" height="19" viewBox="0 0 20 19"><path d="M1 18l2-4 8-7 2 2-8 7z" fill="#d9eaf5" stroke="#7090ab" /><path d="M9 5l2-1 4-3.500q4-1 4.500 2.500L16 7.500l-1 3z" fill="#2c6596" /></svg>
              </ToolCell>
              <ToolCell>
                <svg width="19" height="19" viewBox="0 0 19 19"><circle cx="7" cy="7" r="6" fill="#e5f0f7" stroke="#8c9aa5" strokeWidth="1.500" /><path d="M11.500 11.500l6 6" stroke="#9a6b45" strokeWidth="3" /></svg>
              </ToolCell>
            </ToolGrid>
          </GroupBody>
          <GroupName><Fit w={28} size={L}>Tools</Fit></GroupName>
        </Group>
        <Group $w={62}>
          <GroupBody>
            <BigButton $w={57}>
              <IconArea $h={51}>
                <svg width="39" height="39" viewBox="0 0 39 39"><rect x="0.500" y="0.500" width="38" height="38" fill="#f0f5f8" stroke="#a7adb3" /><path d="M16 9Q3 14 3 26q1 11 14 11 5-1 6-6-6 3-11 0Q2 20 16 9z" fill="#e8622c" /><path d="M27 14L38 2v20l-5 2z" fill="#8fa3b3" /><path d="M28 15L38 4" stroke="#dfe8ee" strokeWidth="2" /><path d="M15 34q0-10 9-15 6-2 10 3 2 7-5 10-6 3-14 2z" fill="#93683d" /></svg>
              </IconArea>
              <Fit w={44} size={L} lh={16} dy={-1.5}>Brushes</Fit>
              <Caret $mt={4} />
            </BigButton>
          </GroupBody>
        </Group>
        <Group $w={283}>
          <GroupBody>
            <Gallery>
              <ShapeGrid>
                {shapePaths.map((d, i) => (
                  <svg key={i} width="20" height="15" viewBox="0 0 20 15"><path d={d} fill={i < 2 ? "none" : "#e8f3fa"} stroke="#38699b" strokeWidth="1.100" /></svg>
                ))}
              </ShapeGrid>
              <GalleryScroll>
                <svg width="6" height="4"><path d="M0 4h6L3 0z" fill="#a5a5a5" /></svg>
                <svg width="6" height="4"><path d="M0 0h6L3 4z" fill="#444" /></svg>
                <svg width="7" height="7"><path d="M0 0h7v1H0zM0 2.500h7L3.500 6.500z" fill="#444" /></svg>
              </GalleryScroll>
            </Gallery>
            <SmallRows $pl={6}>
              <SmallRow $icon={20} $off>
                <svg height="17" viewBox="0 0 20 17" fill="none" stroke="#98a4b3"><path d="M14 1.500H0.500v14h15V8" /><path d="M5 14L17 1l3 2L8 15z" fill="#aab4c0" /></svg>
                <Fit w={41} size={L}>Outline</Fit>
                <Caret $small $mt={-3} $color="#666" />
              </SmallRow>
              <SmallRow $icon={20} $off>
                <svg height="17" viewBox="0 0 20 17"><path d="M0 12h20v5H0z" fill="#a7b8cc" /><path d="M10 2l7 7-6 5-7-6z" fill="#dde6ef" stroke="#92a2b6" /><path d="M1 12q0-7 6-8v3q-3 1-3 5z" fill="#a7b8cc" /><path d="M9 6V0" stroke="#92a2b6" /></svg>
                <Fit w={15} size={L}>Fill</Fit>
                <Caret $small $mt={-3} $color="#666" />
              </SmallRow>
            </SmallRows>
          </GroupBody>
          <GroupName><Fit w={40} size={L}>Shapes</Fit></GroupName>
        </Group>
        <Group $w={62}>
          <GroupBody>
            <BigButton $w={58}>
              <IconArea $h={48}>
                <svg width="38" height="34" fill="#1c355e"><rect y="0.500" width="38" height="1" /><rect y="5" width="38" height="2" /><rect y="11" width="38" height="3" /><rect y="18" width="38" height="5" /><rect y="27" width="38" height="6.500" /></svg>
              </IconArea>
              <Fit w={23} size={L} lh={19} dx={-1} dy={-1}>Size</Fit>
              <Caret $mt={4} />
            </BigButton>
          </GroupBody>
        </Group>
        <Group $w={426}>
          <GroupBody>
            <ColorSlot $w={50} $ml={4} $on>
              <IconArea $h={46}><BigSwatch $w={39} $h={40} $c="#ed1c24" $pad={2} /></IconArea>
              <Fit w={31} size={L} lh={17} dx={-1}>Color</Fit>
              <Fit w={7} size={L} lh={17} dx={-1}>1</Fit>
            </ColorSlot>
            <ColorSlot $w={42} $ml={3}>
              <IconArea $h={46}><BigSwatch $w={29} $h={29} $c="#ffffff" $pad={0} /></IconArea>
              <Fit w={31} size={L} lh={17} dx={-1}>Color</Fit>
              <Fit w={7} size={L} lh={17}>2</Fit>
            </ColorSlot>
            <PaletteGrid>
              {paletteColors.map((c, i) => <PaletteCell key={i} $c={c} />)}
            </PaletteGrid>
            <Gap $w={2} />
            <BigButton $w={47}>
              <IconArea $h={49}>
                <svg width="35" height="36" viewBox="0 0 35 36">
                  <defs>
                    <linearGradient id="hue"><stop offset="0" stopColor="#f33" /><stop offset="0.170" stopColor="#fd2" /><stop offset="0.350" stopColor="#3d3" /><stop offset="0.500" stopColor="#2dd" /><stop offset="0.650" stopColor="#33f" /><stop offset="0.820" stopColor="#e3e" /><stop offset="1" stopColor="#f22" /></linearGradient>
                    <linearGradient id="fade" x1="0" y1="0" x2="0" y2="1"><stop offset="0.300" stopColor="#808080" stopOpacity="0" /><stop offset="1" stopColor="#808080" stopOpacity="0.900" /></linearGradient>
                  </defs>
                  <rect x="0.500" y="0.500" width="34" height="35" rx="1" fill="#ccc" stroke="#aaa" />
                  <rect x="2" y="2" width="31" height="32" fill="url(#hue)" /><rect x="2" y="2" width="31" height="32" fill="url(#fade)" />
                </svg>
              </IconArea>
              <Fit w={21} size={L} lh={17}>Edit</Fit>
              <Fit w={34} size={L} lh={17}>colors</Fit>
            </BigButton>
          </GroupBody>
          <GroupName><Fit w={36} size={L}>Colors</Fit></GroupName>
        </Group>
        <Group $w={65}>
          <GroupBody>
            <BigButton $w={60}>
              <IconArea $h={49}>
                <svg width="36" height="36" viewBox="0 0 36 36">
                  <defs><linearGradient id="drop" x1="0.300" y1="0" x2="0.600" y2="1"><stop offset="0" stopColor="#3cc8f4" /><stop offset="0.450" stopColor="#7a6be8" /><stop offset="0.750" stopColor="#e0527f" /><stop offset="1" stopColor="#f5a623" /></linearGradient></defs>
                  <rect x="0.500" y="0.500" width="35" height="35" fill="#f8f8fa" stroke="#b9bcc0" />
                  <path d="M18 4c6 0 10.500 4.500 10.500 10 0 7-7 9-12.500 18 0-7-8.500-9-8.500-18C7.500 8.500 12 4 18 4z" fill="url(#drop)" />
                </svg>
              </IconArea>
              <Fit w={48} size={L} lh={17}>Edit with</Fit>
              <Fit w={47} size={L} lh={17}>Paint 3D</Fit>
            </BigButton>
          </GroupBody>
        </Group>
      </Ribbon>
      <Workspace><Drawing /></Workspace>
      <StatusBar>
        <StatusCell $w={196} $pl={3}>
          <svg width="16" height="16" viewBox="0 0 16 16" fill="none" stroke="#1f3c5c" strokeWidth="1.200"><path d="M8 1v14M1 8h14M6 3l2-2 2 2M6 13l2 2 2-2M3 6L1 8l2 2M13 6l2 2-2 2" /></svg>
          <Fit w={71} size={14} dy={1.5}>654, 356px</Fit>
        </StatusCell>
        <StatusCell $w={197} $pl={4}><DimIcon dashed /></StatusCell>
        <StatusCell $w={196} $pl={3}><DimIcon /><Fit w={88} size={14} dx={-1} dy={1.5}>1237 × 758px</Fit></StatusCell>
        <StatusCell $w={196} $pl={0} />
        <StatusCell $w={519} $pl={0} />
        <Zoomer>
          <Fit w={36} size={14} dx={-1} dy={2}>100%</Fit>
          <Gap $w={7} />
          <svg width="19" height="19" viewBox="0 0 19 19"><circle cx="9.500" cy="9.500" r="8.700" fill="#f4f4f4" stroke="#8a8a8a" /><path d="M5 9.500h9" stroke="#444" strokeWidth="2" /></svg>
          <Gap $w={13} />
          <svg width="103" height="22" viewBox="0 0 103 22"><rect x="0.500" y="8.500" width="102" height="5" fill="#e7e9ea" stroke="#d2d4d6" /><path d="M46 0h12v18l-6 4-6-4z" fill="#0078d7" /></svg>
          <Gap $w={12} />
          <svg width="19" height="19" viewBox="0 0 19 19"><circle cx="9.500" cy="9.500" r="8.700" fill="#f4f4f4" stroke="#8a8a8a" /><path d="M5 9.500h9M9.500 5v9" stroke="#444" strokeWidth="2" /></svg>
        </Zoomer>
      </StatusBar>
      <InnerBar>
        <Slot $w={58}><WinLogo s={20} fill="#c8c8ce" /></Slot>
        <InnerSearch><SearchIcon s={20} /><Fit w={156} size={18} dx={-1} dy={1}>Type here to search</Fit></InnerSearch>
        <Slot $w={58}><svg width="19" height="19"><circle cx="9.500" cy="9.500" r="8" fill="none" stroke="#fff" strokeWidth="2.500" /></svg></Slot>
        <Slot $w={57}><TaskView s={20} /></Slot>
        <Slot $w={59}><Edge s={30} id="ei" /></Slot>
        <Slot $w={41}><Explorer w={26} h={22} /></Slot>
        <Slot $w={60}><Store w={28} h={28} /></Slot>
        <Slot $w={43}>
          <svg width="30" height="27" viewBox="0 0 30 27"><path d="M0 9L15 0l15 9v6H0z" fill="#0d62b0" /><path d="M3 8h24v10H3z" fill="#f3f7fa" /><path d="M0 9l15 9.500L30 9v18H0z" fill="#35b4f0" /><path d="M0 27l15-9 15 9z" fill="#1c8fdc" /></svg>
        </Slot>
        <Slot $w={56}>
          <svg width="28" height="28" viewBox="0 0 28 28"><path d="M14 28C6 28 0 22 0 14 0 10 2 7 2 4l3 4 4-1-1-4 6 3L17 0c1 3 4 3 6 7l2 1c2 3 3 6 3 8 0 7-6 12-14 12z" fill="#ff7a2a" /><path d="M17 0c1 3 4 3 6 7 3 5 3 12-2 16l-5-14z" fill="#ffcf3a" /><path d="M1 17q3 11 13 11 8 0 12-8-4 4-10 3z" fill="#f1325f" /><circle cx="14" cy="14" r="6" fill="#7b3fd0" /><path d="M4 9q5-1 8 1l3 2-4 2-5 3q-3-4-2-8z" fill="#ff9a2e" /></svg>
        </Slot>
        <Slot $w={49} $bg="#a76233" $edge="#975225"><TeamsIcon s={28} badge="count" /></Slot>
        <Slot $w={51}><Outlook s={28} /></Slot>
        <Slot $w={48}>
          <svg width="27" height="26" viewBox="0 0 27 26"><path d="M8 2h16l-5 22-19-3z" fill="#7fb6be" /><path d="M8 2h16l-2 8H5z" fill="#e3eef0" /><path d="M24 2l3 21-8 1z" fill="#d9e8ea" /><path d="M8 2h16" stroke="#9aa" strokeWidth="2" strokeDasharray="1.500 1.500" /></svg>
        </Slot>
        <Slot $w={49} $bg="#50516a" $ml={2}><PaletteIcon w={28} h={28} /></Slot>
        <Slot $w={52}><Ppt s={28} /></Slot>
        <Slot $w={50} $ml={7}>
          <svg width="29" height="26" viewBox="0 0 29 26"><circle cx="14" cy="13" r="12.500" fill="#f6ac23" /><path d="M4 5h24M8 10h19M0 15h19M1 20h23" stroke="#ffe9b8" strokeWidth="1.700" strokeLinecap="round" /></svg>
        </Slot>
        <Fit w={35} size={17} dy={1}>32°C</Fit>
        <Gap $w={30} />
        <ChevronUp w={15} h={9} c="#fff" />
        <Gap $w={11} />
        <Cloud w={19} h={14} bad />
        <Gap $w={14} />
        <TrayMic w={12} h={20} />
        <Gap $w={13} />
        <Battery w={20} h={14} />
        <Gap $w={10} />
        <Speaker w={19} h={15} />
        <Gap $w={12} />
        <Wifi s={15} />
        <Clock $w={76} $gap={1} $ml={13}>
          <Fit w={59} size={15.5} lh={21}>12:12 PM</Fit>
          <Fit w={75} size={15.5} lh={21}>01-12-2022</Fit>
        </Clock>
        <Gap $w={22} />
        <svg width="20" height="20" viewBox="0 0 20 20"><path d="M0 0h20v14h-8l-4 4v-4H0z" fill="#fff" /><path d="M4 4.500h12M4 7.500h12M4 10.500h8" stroke="#3a3b55" strokeWidth="1.300" /><path d="M18 9.500a5.500 5.500 0 1 1-7 7c4 1 7-3 7-7z" fill="#fff" stroke="#24253f" /></svg>
        <EndLine $ml={24} $w={1} />
      </InnerBar>
      <SpeakerTag><Fit w={114} size={17.4}>Nilesh Wadkar</Fit></SpeakerTag>
    </Shared>
  );
}

const people = [
  { i: "NW", iw: 73, n: "Nilesh Wadkar", w: 115, g: 0, bg: "#cfe0d5", fg: "#16432c", speaking: true },
  { i: "SP", iw: 48, n: "Soham Pen...", w: 103, g: 17, bg: "#d6d3e9", fg: "#2a2057", muted: true },
  { i: "SH", iw: 54, n: "Sahil Hamd...", w: 104, g: 15, bg: "#dbf0f3", fg: "#2f6a6e", muted: true },
  { i: "PP", iw: 49, n: "Pramodku...", w: 95, g: 25, bg: "#d1ebde", fg: "#17633b", muted: true },
  { i: "VG", iw: 55, n: "Vinay G", w: 61, g: 15, bg: "#cfe0d5", fg: "#16432c", muted: true, mt: 4 },
];

export default function App() {
  return (
    <Page>
      <GlobalStyle />
      <TitleBar>
        <Fit w={392} size={20}>Core Testing Concept (Freshers Bangalore)</Fit>
        <WindowButtons>
          <svg width="18" height="20"><path d="M0 10h18" stroke="#fff" strokeWidth="1.500" /></svg>
          <svg width="21" height="22" viewBox="0 0 21 22" fill="none" stroke="#fff" strokeWidth="1.400"><path d="M0.700 4h16.600v17.300H0.700zM4 4V0.700h16.300V18H17.500" /></svg>
          <svg width="18" height="18"><path d="M0 0l18 18M18 0L0 18" stroke="#fff" strokeWidth="1.500" /></svg>
        </WindowButtons>
      </TitleBar>
      <MeetingBar>
        <svg width="22" height="24" viewBox="0 0 22 24" {...line} stroke="#fff" strokeWidth="1.600"><path d="M11 0.800C8 3.200 5 4 0.800 4.200V12c0 6 4 9.500 10.200 11.400C17.200 21.500 21.200 18 21.200 12V4.200C17 4 14 3.200 11 0.800z" /></svg>
        <Gap $w={25} />
        <Fit w={77} size={20} color="#fff" dy={1.5}>02:26:40</Fit>
        <RequestButton><Fit w={150} size={20} weight={600}>Request control</Fit></RequestButton>
        <Tool $gap={9}>
          <svg width="28" viewBox="0 0 28 36" {...line}><rect x="6" y="4" width="21" height="21" rx="4" /><path d="M3.500 7Q1 8 1 11v12q0 7 7 7h12q3 0 4-2M12 18.500l8.500-8.500M13.500 10h7v7" /></svg>
          <Fit w={57} size={17.3}>Pop out</Fit>
        </Tool>
        <BarDivider $ml={12} />
        <Tool $gap={13}>
          <svg width="30" viewBox="0 0 30 36" {...line}><circle cx="10.500" cy="9" r="6" /><circle cx="23.500" cy="11" r="4" /><path d="M3.500 18h15q2.500 0 2.500 2.500V22c0 5-4 8-10 8s-10-3-10-8v-1.500Q1 18 3.500 18zM24 18h3q2 0 2 2v1c0 4-3 7-7 7" /></svg>
          <Fit w={50} size={17.3}>People</Fit>
        </Tool>
        <Tool>
          <svg width="30" viewBox="0 0 30 36" {...line}><path d="M15.500 3a14 14 0 1 1-7 26.200L1 31.500l2-7.300A14 14 0 0 1 15.500 3zM10 15h10.500M10 20.500h7" /></svg>
          <Fit w={35} size={17.3} dx={-1}>Chat</Fit>
        </Tool>
        <Tool>
          <svg width="32" viewBox="0 0 32 36" {...line}><path d="M10 22q-7-1-9-8V6q0-2 1.700-2T4.500 6M4.500 12V4q0-2.500 2-2.500t2 2.500v7M8.500 4q0-3 2.200-3T13 4v7M13 5q0-2 1.800-2t1.800 2v7l4 1q1 .3 0 1.500l-4 3.500" /><path d="M24.500 12.500a9.500 9.500 0 1 1-12 9.500M18.500 24q3.500 4 7.500 0" /><circle cx="19" cy="19" r=".6" /><circle cx="25" cy="19" r=".6" /></svg>
          <Fit w={70} size={17.3}>Reactions</Fit>
        </Tool>
        <Tool>
          <svg width="28" viewBox="0 0 28 36" {...line}><path d="M14 3v27M0.500 16.500h27" strokeWidth="1.700" /></svg>
          <Fit w={38} size={17.3}>Apps</Fit>
        </Tool>
        <Tool>
          <svg width="26" viewBox="0 0 26 36" fill="currentColor"><circle cx="3.500" cy="16.500" r="3.300" /><circle cx="13" cy="16.500" r="3.300" /><circle cx="22.500" cy="16.500" r="3.300" /></svg>
          <Fit w={40} size={17.3}>More</Fit>
        </Tool>
        <BarDivider $ml={12} />
        <Tool $bright $gap={13}>
          <svg width="30" viewBox="0 0 30 36"><rect x="0" y="5" width="20.500" height="22.500" rx="4" fill="currentColor" /><path d="M22.500 13L28 8q2-1.500 2 1v15q0 2.500-2 1l-5.500-5z" fill="currentColor" /><path d="M2 1l29 29" stroke="#242424" strokeWidth="3" /><path d="M0.500 2l29 28.500" stroke="currentColor" strokeWidth="2" strokeLinecap="round" /></svg>
          <Fit w={56} size={17.3}>Camera</Fit>
        </Tool>
        <Tool $bright>
          <IconArea $h={34}><MicOff s={30} /></IconArea>
          <Fit w={27} size={17.3}>Mic</Fit>
        </Tool>
        <Tool $bright>
          <svg width="30" viewBox="0 0 30 36"><rect y="4.500" width="30" height="23.500" rx="4" fill="currentColor" /><path d="M15 23V10M10 14.500l5-5 5 5" fill="none" stroke="#242424" strokeWidth="2" strokeLinecap="round" strokeLinejoin="round" /></svg>
          <Fit w={41} size={17.3}>Share</Fit>
        </Tool>
        <LeaveButton>
          <svg width="31" height="14" viewBox="0 0 31 14"><path d="M15.500 0C24 0 30.500 3.500 30.500 8.500c0 3.500-1 4.500-3 4.200l-4-.8c-1.500-.300-2-1-2-3.500 0-1.500-3-2.200-6-2.200s-6 .700-6 2.200c0 2.500-.500 3.200-2 3.500l-4 .8c-2 .300-3-.700-3-4.200C0.500 3.500 7 0 15.500 0z" fill="#fff" /></svg>
          <Fit w={54} size={20} weight={600} dy={1}>Leave</Fit>
        </LeaveButton>
      </MeetingBar>
      <Body>
        <PaintWindow />
        <Sidebar>
          <People>
            {people.map((p) => (
              <Person key={p.i} $mt={p.mt}>
                <Avatar $bg={p.bg} $fg={p.fg} $speaking={p.speaking}><Fit w={p.iw} size={41} weight={600}>{p.i}</Fit></Avatar>
                <NameRow $gap={p.g}>
                  <Fit w={p.w} size={17.3} lh={24} dy={1}>{p.n}</Fit>
                  {p.muted && <MicOff s={18} />}
                </NameRow>
              </Person>
            ))}
            <Person><Avatar $bg="#484644" $fg="#fff" $outline><Fit w={35} size={20} dy={1}>+61</Fit></Avatar></Person>
          </People>
          <SelfTile><Avatar $bg="#d6d3e9" $fg="#2a2057" $small><Fit w={66} size={32} weight={600}>WM</Fit></Avatar></SelfTile>
        </Sidebar>
      </Body>
      <OuterBar>
        <Slot $w={72}><WinLogo s={24} fill="#fff" /></Slot>
        <OuterSearch>
          <SearchIcon s={24} />
          <Gap $w={18} />
          <Fit w={198} size={22.5} dy={1.5}>Type here to search</Fit>
          <Pill>
            <svg width="12" height="12" fill="#1b5f9e"><rect width="3" height="3" /><rect x="4.500" width="3" height="3" fill="#9a9da1" /><rect x="9" width="3" height="3" /><rect y="4.500" width="3" height="3" /><rect x="4.500" y="4.500" width="3" height="3" /><rect x="9" y="4.500" width="3" height="3" fill="#9a9da1" /><rect y="9" width="3" height="3" fill="#9a9da1" /><rect x="4.500" y="9" width="3" height="3" /><rect x="9" y="9" width="3" height="3" /></svg>
            <Brand>
              <Fit w={44} size={15} weight={800} color="#15568f">Citius</Fit>
              <Fit w={35} size={15} weight={700} color="#9a9da1">Tech</Fit>
            </Brand>
          </Pill>
        </OuterSearch>
        <Slot $w={72}><TaskView s={24} /></Slot>
        <Slot $w={61} $ml={11} $under="#76b9ed"><Edge s={36} id="eo" /></Slot>
        <Slot $w={61} $ml={14} $under="#76b9ed"><Explorer w={32} h={27} /></Slot>
        <Slot $w={61} $ml={13}><Store w={35} h={35} /></Slot>
        <Slot $w={73} $ml={10} $bg="#a9663a" $edge="#9c5426" $under="#ff7800"><Outlook s={32} mail /></Slot>
        <Slot $w={73} $ml={2} $bg="#4d5a66" $edge="#3f4956" $under="#76b9ed"><TeamsIcon s={33} badge="live" /></Slot>
        <Slot $w={61} $ml={7} $under="#76b9ed"><Chrome /></Slot>
        <Slot $w={61} $ml={14} $under="#76b9ed"><Ppt s={36} /></Slot>
        <Gap $w={139} />
        <svg width="34" height="34" viewBox="0 0 34 34"><path d="M15 1q2-2 4 0l14 14q2 2 0 4L19 33q-2 2-4 0L1 19q-2-2 0-4z" fill="#f6a608" /><circle cx="14.500" cy="11.500" r="1.500" fill="#222" /><path d="M14.500 14l-2.500 4 3.500 2v4M12 18l-2 5M13.500 14l3.500 3 1 2.500M11 14l8 8" stroke="#222" strokeWidth="1.300" fill="none" /><path d="M19 23.500l2.500-4 2.500 4z" fill="#222" /></svg>
        <Gap $w={13} />
        <Fit w={60} size={21} dx={-1} dy={1.5}>Slow...</Fit>
        <Gap $w={38} />
        <ChevronUp w={18} h={10} c="#fff" />
        <Gap $w={15} />
        <Cloud w={25} h={17} />
        <Gap $w={15} />
        <TrayMic w={15} h={24} />
        <Gap $w={17} />
        <Battery w={24} h={17} />
        <Gap $w={16} />
        <Wifi s={19} />
        <Gap $w={14} />
        <Speaker w={22} h={18} />
        <Gap $w={17} />
        <Fit w={34} size={18} dy={1}>ENG</Fit>
        <Clock $w={96} $gap={0} $ml={19}>
          <Fit w={43} size={18} lh={28}>12:12</Fit>
          <Fit w={94} size={18} lh={28}>01-12-2022</Fit>
        </Clock>
        <Gap $w={27} />
        <svg width="24" height="24" viewBox="0 0 24 24" fill="none" stroke="#fff" strokeWidth="1.400"><path d="M0.700 0.700h22.600v17.600H15l-4 4.500v-4.500H0.700z" /></svg>
        <EndLine $ml={29} $w={2} />
      </OuterBar>
    </Page>
  );
}
